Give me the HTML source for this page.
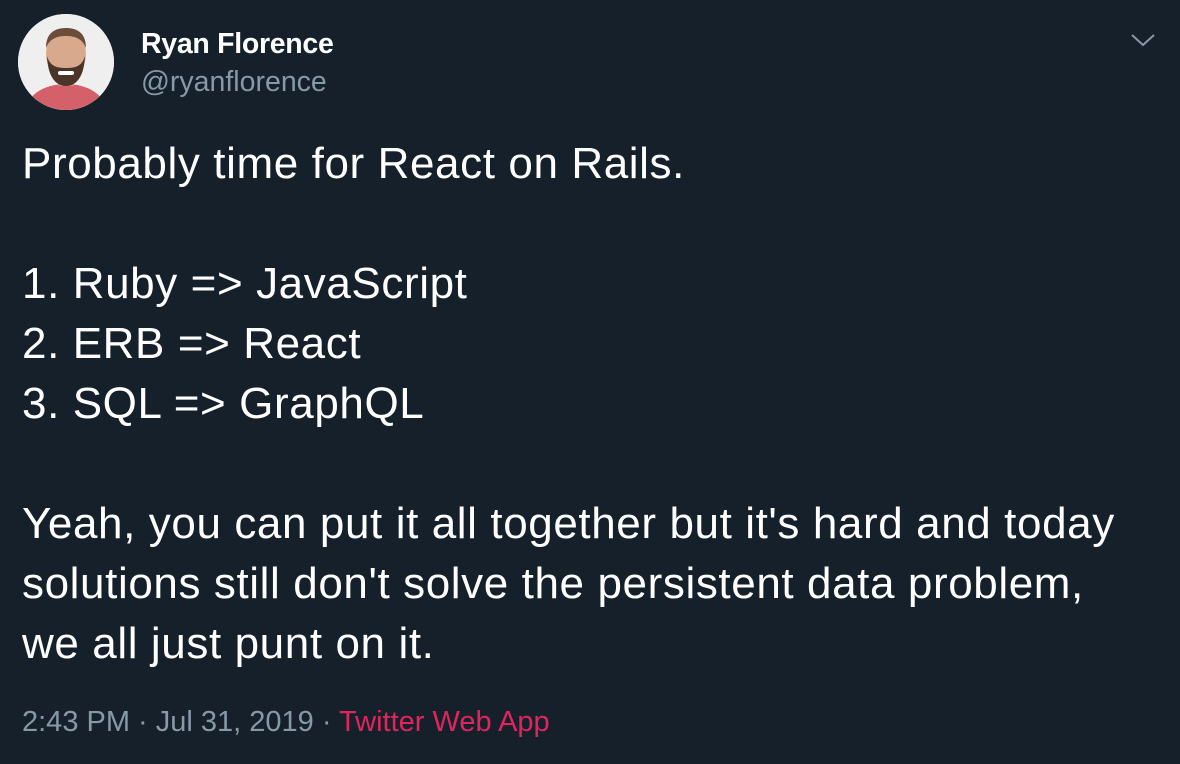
<!DOCTYPE html>
<html><head><style>
body{margin:0;width:1180px;height:764px;background:#15202b;font-family:"Liberation Sans",Arial,sans-serif;position:relative;overflow:hidden}
.av{position:absolute;left:18px;top:14px;width:96px;height:96px;border-radius:50%;background:#eeeeee;overflow:hidden}
.name{position:absolute;left:141px;top:28px;font-size:28.5px;font-weight:bold;color:#fff;letter-spacing:-0.3px}
.handle{position:absolute;left:141px;top:66px;font-size:28.5px;color:#8899a6}
.body{position:absolute;left:22px;top:134px;font-size:44px;line-height:60px;color:#fff;white-space:pre;letter-spacing:0.6px}
.foot{position:absolute;left:22px;top:706px;font-size:29px;color:#8899a6}
.foot span{color:#e0245e}
</style></head><body>
<div class="av"><svg width="96" height="96" viewBox="0 0 96 96">
<rect width="96" height="96" fill="#efefef"/>
<path d="M8 96 C10 78 30 70 48 70 C66 70 86 78 88 96Z" fill="#d4606a"/>
<rect x="40" y="56" width="16" height="16" fill="#c99a82"/>
<ellipse cx="48" cy="40" rx="20" ry="25" fill="#d9a98e"/>
<path d="M29 42 C30 66 40 72 48 72 C56 72 66 66 67 42 C64 52 58 54 48 54 C38 54 32 52 29 42Z" fill="#4a3528"/>
<path d="M28 34 C28 18 38 14 48 14 C58 14 68 18 68 34 C64 24 56 22 48 22 C40 22 32 24 28 34Z" fill="#6b4d3a"/>
<rect x="40" y="57" width="16" height="4" rx="2" fill="#fff"/>
</svg></div>
<div class="name">Ryan Florence</div>
<div class="handle">@ryanflorence</div>
<svg style="position:absolute;left:1130px;top:32px" width="26" height="16" viewBox="0 0 26 16"><path d="M2 3 L13 13 L24 3" fill="none" stroke="#8899a6" stroke-width="2"/></svg>
<div class="body">Probably time for React on Rails.

1. Ruby =&gt; JavaScript
2. ERB =&gt; React
3. SQL =&gt; GraphQL

Yeah, you can put it all together but it's hard and today
solutions still don't solve the persistent data problem,
we all just punt on it.</div>
<div class="foot">2:43 PM · Jul 31, 2019 · <span>Twitter Web App</span></div>
</body></html>
